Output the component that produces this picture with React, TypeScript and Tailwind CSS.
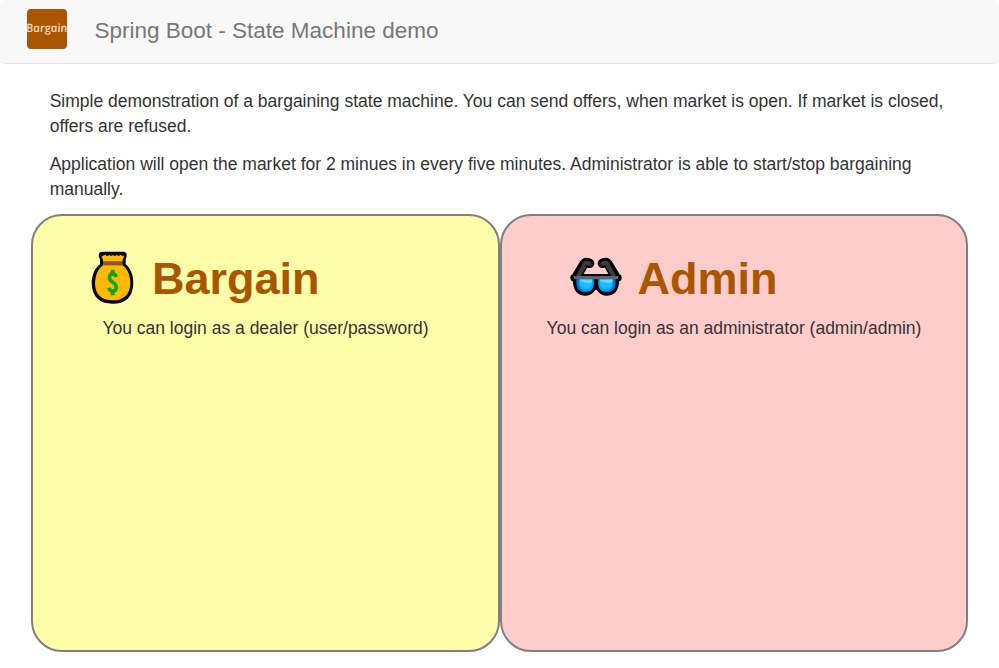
import type { ReactNode } from 'react';

function MoneyBag() {
  return (
    <svg width="70" height="65" viewBox="0 0 210 195" className="shrink-0">
      <g transform="translate(24 12)">
        <path
          d="M42 8 H106 Q116 9 116 18 Q116 25 113 31 L113 46 C128 58 136 78 136 104 Q133 164 74 164 Q14 163 11 104 C11 78 20 58 36 46 V31 Q32 25 32 18 Q33 9 42 8Z"
          fill="#000"
        />
        <path
          d="M41 20 Q47 21 52 17 Q58 24 64 17 Q69 24 75 17 Q81 24 86 17 Q92 24 97 17 Q102 21 108 20 Q108 27 104 31 V38 H45 V31 Q40 27 41 20Z"
          fill="#ffb900"
        />
        <path d="M45 37 H104 V49 H45Z" fill="#8e562e" />
        <path d="M45 49 H104 C119 59 127 80 127 104 Q124 154 74 154 Q23 153 21 104 C21 80 30 59 45 49Z" fill="#ffb900" />
        <path d="M74 62 V76 M74 125 V139" fill="none" stroke="#10a310" strokeWidth="12" />
        <path d="M85 84 Q83 75 74 75 Q64 76 64 86 Q64 93 73 99 Q85 106 85 115 Q84 126 74 126 Q64 126 63 116" fill="none" stroke="#10a310" strokeWidth="11" />
      </g>
    </svg>
  );
}

function DarkGlasses() {
  return (
    <svg width="70" height="65" viewBox="0 0 210 195" className="shrink-0">
      <g transform="translate(21 27)">
        <g fill="none" stroke="#000" strokeLinecap="round" strokeLinejoin="round">
          <path d="M30 65 L51 30 Q56 22 68 28" strokeWidth="28" />
          <path d="M144 65 L123 30 Q118 22 106 28" strokeWidth="28" />
          <path d="M21 71 H153" strokeWidth="22" />
        </g>
        <path
          d="M16 66 H158 L156 88 Q151 125 120 125 Q102 125 91 110 Q87 104 83 110 Q72 125 54 125 Q23 125 18 88Z"
          fill="#000"
        />
        <path d="M34 66 L53 30 Q57 23 67 29" fill="none" stroke="#3b3b3b" strokeWidth="13" strokeLinecap="round" />
        <path d="M140 66 L121 30 Q117 23 107 29" fill="none" stroke="#3b3b3b" strokeWidth="13" strokeLinecap="round" />
        <path d="M28 76 H80 V88 Q80 115 55 115 Q29 115 28 88Z" fill="#006fdd" />
        <path d="M94 76 H146 V88 Q145 115 119 115 Q94 115 94 88Z" fill="#006fdd" />
        <path d="M35 76 H80 V88 Q79 112 59 112 Q36 111 35 88Z" fill="#00a4ff" />
        <path d="M94 76 H139 V88 Q138 111 115 112 Q95 112 94 88Z" fill="#00a4ff" />
        <path d="M38 77 H75 V87 Q74 105 57 105 Q39 104 38 87Z" fill="#20bbff" />
        <path d="M99 77 H136 V87 Q135 104 118 105 Q100 105 99 87Z" fill="#20bbff" />
        <path d="M40 76 H75 V84 Q65 91 40 81Z M99 76 H136 V84 Q125 91 99 81Z" fill="#5adcff" />
        <path d="M20 66 H154 V76 H22Z" fill="#636363" />
      </g>
    </svg>
  );
}

function Card({ tone, pad, gap, title, icon, children }: { tone: string; pad: string; gap: string; title: string; icon: ReactNode; children: ReactNode }) {
  return (
    <section className={`h-[438px] flex-1 rounded-[31px] border-2 border-[#808080] pt-[29px] ${tone}`}>
      <div className={`flex h-[71px] items-start ${pad} ${gap}`}>
        {icon}
        <h1 className="pt-[9px] text-[45px] leading-[50px] font-bold text-[#aa5500]">{title}</h1>
      </div>
      <p className="pl-[0.5px] text-center">{children}</p>
    </section>
  );
}

export default function App() {
  return (
    <div className="h-[668px] overflow-hidden bg-white font-['Liberation_Sans',Arial,sans-serif] text-[17.5px] leading-[25px] text-[#333]">
      <header className="flex h-16 items-start rounded-[5px] border-b border-[#e7e7e7] bg-[#f8f8f8] pt-[9px] pl-[27px]">
        <div className="flex h-10 w-10 shrink-0 items-center justify-center overflow-hidden rounded-[4px] bg-[#aa5500]">
          <span className="-mt-[3px] -skew-x-[-10deg] font-['Open_Sans',sans-serif] text-[11.5px] leading-none font-semibold text-[#ecd5bf] italic">Bargain</span>
        </div>
        <span className="ml-[27.5px] pt-[9px] text-[22.5px] leading-[25px] text-[#777]">Spring Boot - State Machine demo</span>
      </header>
      <main className="pt-[25px]">
        <div className="px-[49.7px]">
          <p className="mb-[13px]">
            Simple demonstration of a bargaining state machine. You can send offers, when market is open. If market is closed, offers are refused.
          </p>
          <p className="mb-[12px]">
            Application will open the market for 2 minues in every five minutes. Administrator is able to start/stop bargaining manually.
          </p>
        </div>
        <div className="flex px-[31px]">
          <Card tone="bg-[#ffffaa]" pad="pl-[47px]" gap="gap-[2px]" title="Bargain" icon={<MoneyBag />}>
            You can login as a dealer (user/password)
          </Card>
          <Card tone="bg-[#ffcccc]" pad="pl-[58px]" gap="gap-[8px]" title="Admin" icon={<DarkGlasses />}>
            You can login as an administrator (admin/admin)
          </Card>
        </div>
      </main>
    </div>
  );
}
